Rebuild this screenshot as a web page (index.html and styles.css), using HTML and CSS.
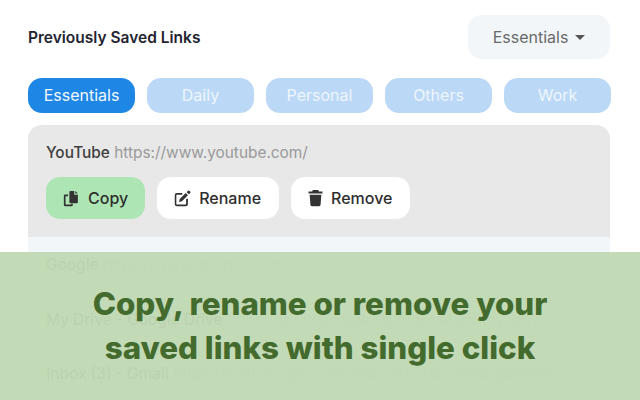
FILE: index.html
```html
<!DOCTYPE html>
<html lang="en">
<head>
<meta charset="utf-8">
<title>Previously Saved Links</title>
<link rel="stylesheet" href="styles.css">
</head>
<body>
<main class="page">
  <header class="head">
    <h1 class="title">Previously Saved Links</h1>
    <div class="select">Essentials <span class="caret"></span></div>
  </header>
  <nav class="tabs">
    <div class="tab active">Essentials</div>
    <div class="tab">Daily</div>
    <div class="tab">Personal</div>
    <div class="tab">Others</div>
    <div class="tab">Work</div>
  </nav>
  <section class="list">
    <article class="item open">
      <p class="link"><b>YouTube</b> <span>https://www.youtube.com/</span></p>
      <div class="actions">
        <button class="btn copy">
          <svg class="ico" viewBox="0 0 16 16"><path d="M7 1h3.600v3.400H14v7.100a1 1 0 0 1-1 1H7a1 1 0 0 1-1-1V2a1 1 0 0 1 1-1zM11.600 1 14 3.400h-2.400z"/><path d="M4.800 4.200v1.600H2.400v7.800h5.200v-.6h1.600v1a1.200 1.200 0 0 1-1.200 1.200H2a1.200 1.200 0 0 1-1.200-1.200V5.400A1.200 1.200 0 0 1 2 4.200z"/></svg>
          Copy
        </button>
        <button class="btn">
          <svg class="ico" viewBox="0 0 16 16"><path d="M13 .9a1.300 1.300 0 0 1 1.800 0l.3.3a1.300 1.300 0 0 1 0 1.800L14 4.100 11.900 2zM11 2.900 13.100 5l-5.600 5.600-2.800.7.700-2.800z"/><path d="M2.700 2.800h5.100v1.700H2.800a.6.600 0 0 0-.6.600v8a.6.600 0 0 0 .6.600h8a.6.600 0 0 0 .6-.6V8.200h1.700v5.100a2 2 0 0 1-2 2H2.700a2 2 0 0 1-2-2V4.800a2 2 0 0 1 2-2z"/></svg>
          Rename
        </button>
        <button class="btn">
          <svg class="ico trash" viewBox="1.500 0 13 16"><path d="M5.600.8h4.800l.6 1.400h3.200v1.900H1.800V2.200H5zM2.800 5h10.400l-.7 9.300a1.300 1.300 0 0 1-1.300 1H4.800a1.300 1.300 0 0 1-1.300-1z"/></svg>
          Remove
        </button>
      </div>
    </article>
    <article class="item"><p class="link"><b>Google</b> <span>https://www.google.com/</span></p></article>
    <article class="item"><p class="link"><b>My Drive - Google Drive</b> <span>https://drive.google.com/drive/u/0/my-drive</span></p></article>
    <article class="item"><p class="link"><b>Inbox (3) - Gmail</b> <span>https://mail.google.com/mail/u/0/?tab=rm&amp;ogbl#inbox</span></p></article>
  </section>
</main>
<aside class="banner">Copy, rename or remove your<br>saved links with single click</aside>
</body>
</html>
```

FILE: styles.css
```css
* { box-sizing: border-box; }
html, body { margin: 0; height: 400px; overflow: hidden; background: #fff; }
body { font-family: Inter, "Liberation Sans", sans-serif; position: relative; }
.page { padding: 15px 30px 0 28px; }
.head { display: flex; justify-content: space-between; align-items: center; height: 44px; }
.title { margin: 1px 0 0; font-size: 15.500px; font-weight: 600; color: #1f2430; }
.select {
  width: 142px; height: 44px; border-radius: 14px; background: #f2f6f8;
  display: flex; align-items: center; justify-content: center; gap: 5px;
  font-size: 16px; color: #6a6a6a;
}
.caret { width: 0; height: 0; border: 5px solid transparent; border-top: 5px solid #555; border-bottom: 0; margin-left: 2px; }
.tabs { display: flex; gap: 12px; margin: 19px -1px 0 0; }
.tab {
  flex: 1; height: 35px; padding-bottom: 1px; border-radius: 14px; background: #bbd9f6; color: #eef6fd;
  display: flex; align-items: center; justify-content: center; font-size: 16px;
}
.tab.active { background: #1e86e5; color: #f2f8fe; }
.list { margin-top: 12px; border-radius: 14px 14px 0 0; overflow: hidden; background: #f2f6f8; }
.item { height: 54.500px; padding: 19px 18px 0; }
.item.open { height: 112px; background: #e8e8e8; }
.link { margin: 0; font-size: 15.400px; line-height: 18px; color: #c8cbc8; white-space: nowrap; }
.open .link { color: #9a9a9a; }
.link b { font-weight: 500; color: #3f3f3f; }
.actions { display: flex; gap: 12px; margin-top: 15px; }
.btn {
  height: 42px; padding: 0 18px 0 17px; border: 0; border-radius: 14px; background: #fff; color: #2e2e2e;
  display: flex; align-items: center; gap: 8px; font: 500 16px Inter, "Liberation Sans", sans-serif;
}
.btn.copy { background: #aee5b4; padding-right: 17px; }
.ico { width: 17px; height: 17px; fill: #333; flex: none; }
.ico.trash { width: 15px; height: 18px; }
.banner {
  position: absolute; left: 0; right: 0; top: 252px; height: 148px;
  background: rgba(193, 216, 180, .96);
  color: #436b2e; font-size: 31.300px; line-height: 44px; font-weight: 800;
  text-align: center; padding-top: 30px;
}
```
